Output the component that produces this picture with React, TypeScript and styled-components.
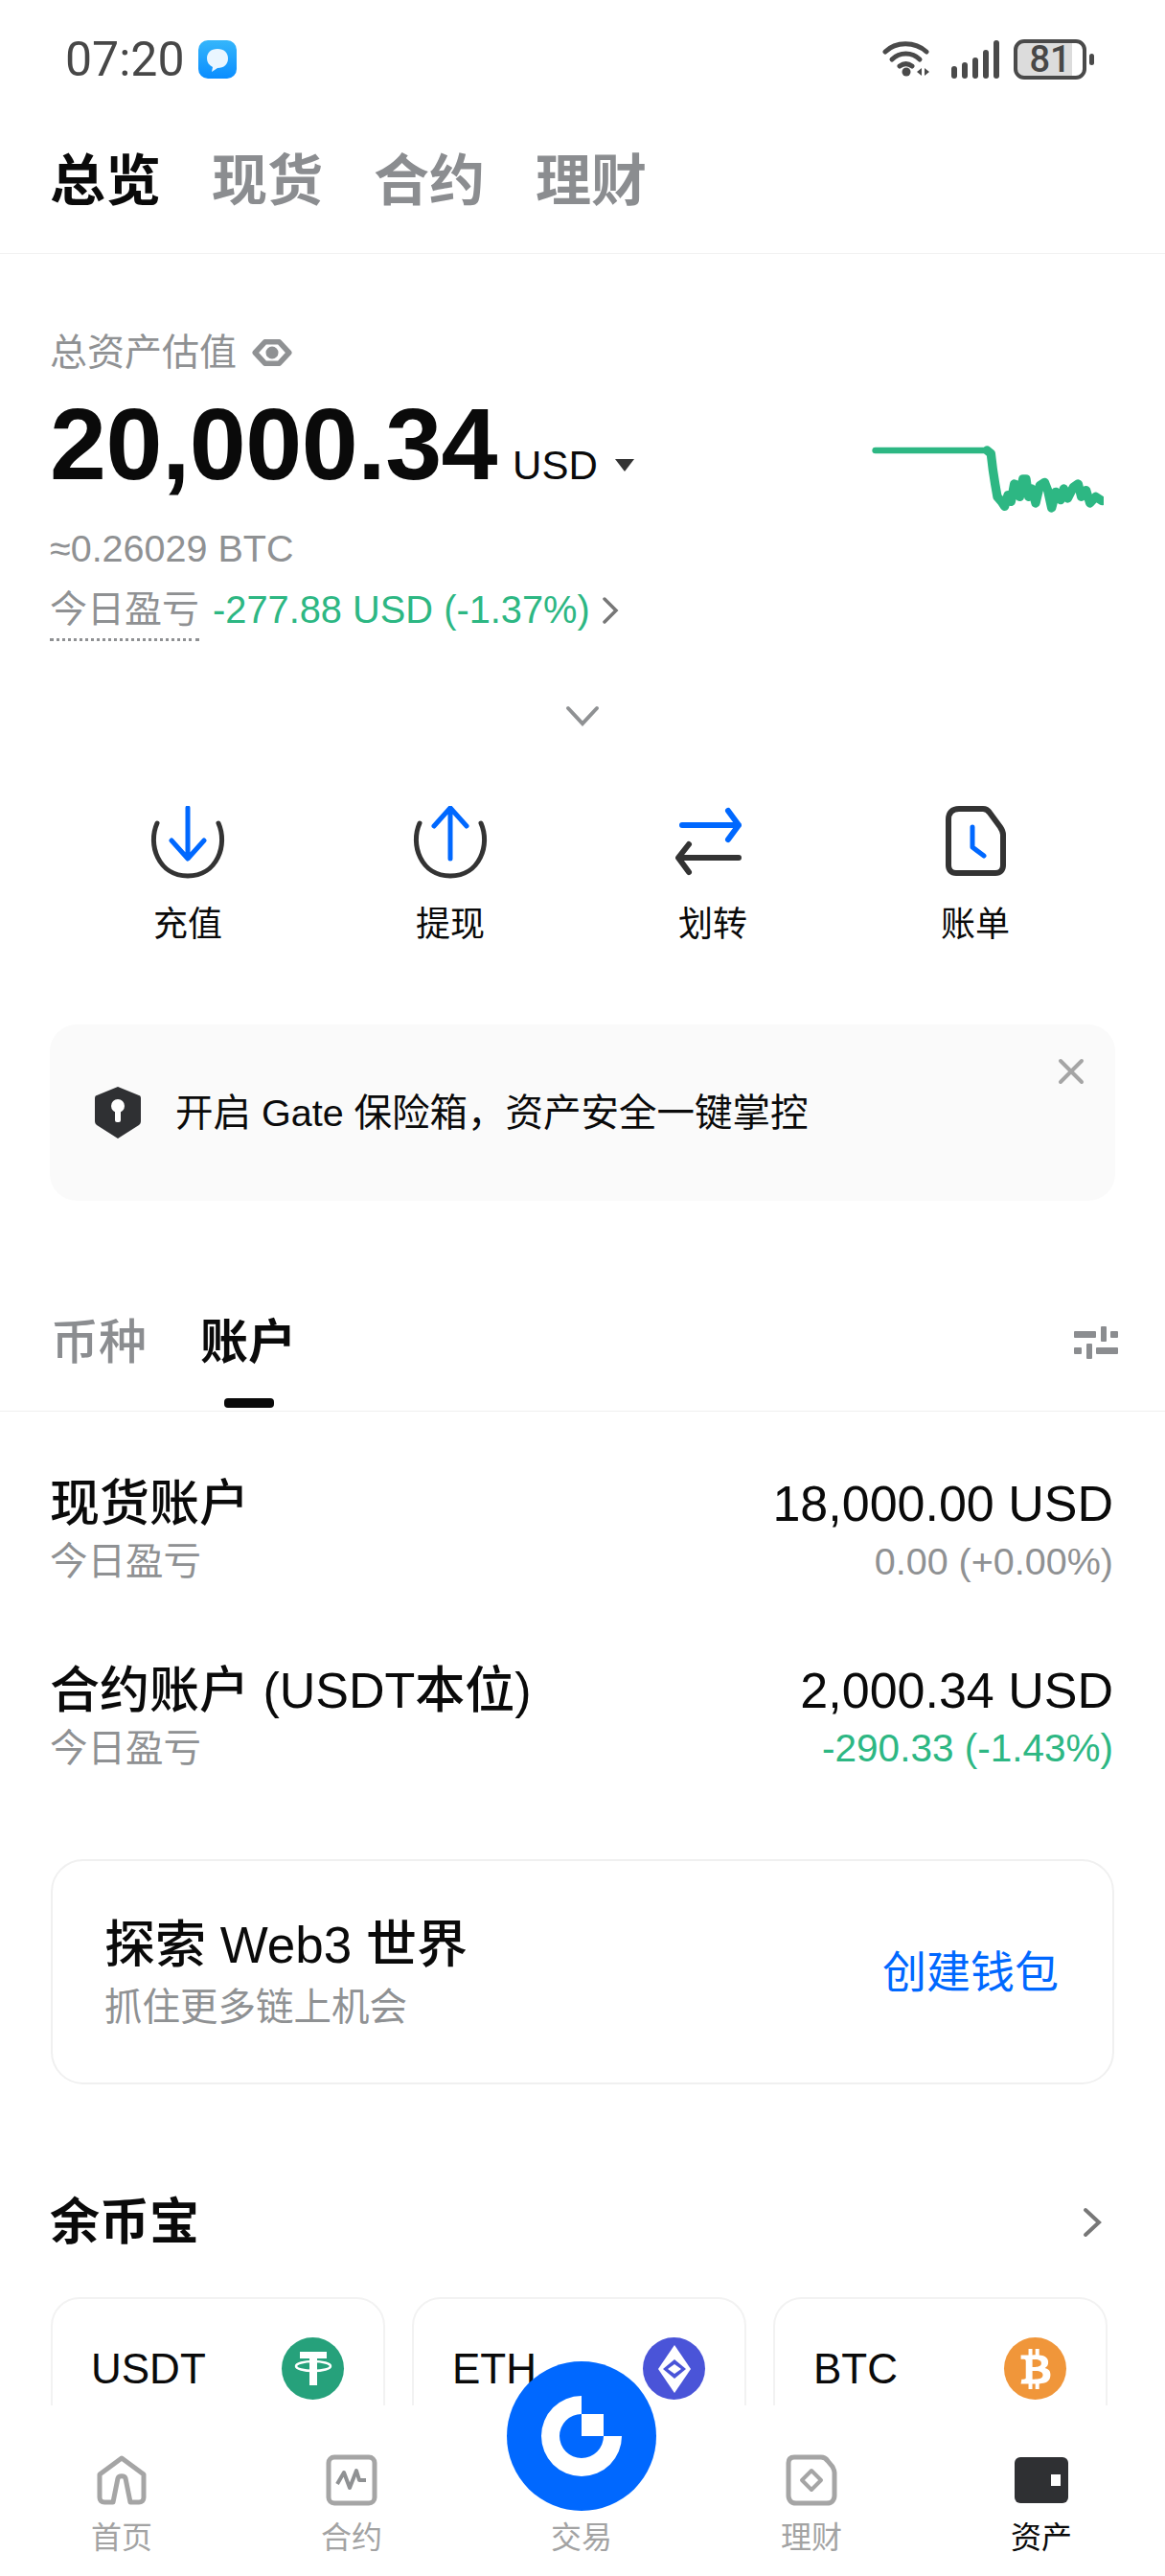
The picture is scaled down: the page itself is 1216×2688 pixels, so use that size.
import styled, { createGlobalStyle } from 'styled-components';
import { FaBtc } from 'react-icons/fa';

const GlobalStyle = createGlobalStyle`
  html, body {
    margin: 0;
    padding: 0;
    background: #fff;
  }
  * {
    box-sizing: border-box;
  }
`;

const Page = styled.div`
  position: relative;
  width: 1216px;
  height: 2688px;
  display: flex;
  flex-direction: column;
  overflow: hidden;
  background: #fff;
  color: #0a0a0a;
  font-family: 'Liberation Sans', 'Noto Sans CJK SC', sans-serif;
`;

const Content = styled.div`
  flex: 1;
  min-height: 0;
  overflow: hidden;
`;

const StatusBar = styled.div`
  height: 124px;
  display: flex;
  align-items: center;
  padding: 0 82px 0 68px;
`;

const Time = styled.span`
  font-family: Roboto, sans-serif;
  font-size: 50px;
  line-height: 60px;
  color: #474747;
`;

const ChatBadge = styled.svg`
  margin-left: 14px;
`;

const StatusIcons = styled.div`
  margin-left: auto;
  display: flex;
  align-items: center;
`;

const SignalBars = styled.svg`
  margin-left: 22px;
`;

const Battery = styled.div`
  position: relative;
  width: 76px;
  height: 42px;
  margin-left: 15px;
  border: 4px solid #4a4a4a;
  border-radius: 11px;
  background: linear-gradient(90deg, #dcdcdc 84%, #fff 84%);
  font-family: Roboto, sans-serif;
  font-size: 38px;
  font-weight: 500;
  line-height: 34px;
  text-align: center;
  color: #474747;
  &::after {
    content: '';
    position: absolute;
    right: -12px;
    top: 11px;
    width: 5px;
    height: 12px;
    border-radius: 3px;
    background: #4a4a4a;
  }
`;

const TopTabs = styled.div`
  height: 141px;
  padding: 33px 52px 0;
  display: flex;
  gap: 53px;
  border-bottom: 1px solid #f2f2f2;
`;

const TopTab = styled.span<{ $active?: boolean }>`
  font-size: 58px;
  line-height: 64px;
  font-weight: 700;
  color: ${props => (props.$active ? '#0a0a0a' : '#8b8d90')};
`;

const Summary = styled.section`
  padding: 81px 53px 0 52px;
  display: flex;
  justify-content: space-between;
  align-items: flex-start;
`;

const SummaryText = styled.div`
  display: flex;
  flex-direction: column;
  align-items: flex-start;
`;

const LabelRow = styled.div`
  display: flex;
  align-items: center;
  gap: 16px;
  font-size: 39px;
  line-height: 44px;
  color: #8f9193;
`;

const AmountRow = styled.div`
  margin-top: 21px;
  display: flex;
  align-items: baseline;
`;

const Amount = styled.span`
  font-size: 106px;
  line-height: 104px;
  font-weight: 700;
  letter-spacing: -0.5px;
`;

const Currency = styled.span`
  margin-left: 16px;
  font-size: 42px;
  line-height: 48px;
`;

const Caret = styled.span`
  align-self: center;
  margin: 44px 0 0 18px;
  width: 0;
  height: 0;
  border-left: 10px solid transparent;
  border-right: 10px solid transparent;
  border-top: 13px solid #333;
`;

const BtcLine = styled.div`
  margin-top: 35px;
  font-size: 39.5px;
  line-height: 44px;
  color: #8f9193;
`;

const PnlRow = styled.div`
  margin-top: 20px;
  display: flex;
  align-items: flex-start;
`;

const PnlLabel = styled.span`
  padding-bottom: 8px;
  border-bottom: 3px dotted #8f9193;
  font-size: 39px;
  line-height: 44px;
  color: #8f9193;
`;

const PnlValue = styled.span`
  margin-left: 14px;
  font-size: 39.8px;
  line-height: 44px;
  color: #2db783;
`;

const PnlChevron = styled.svg`
  margin: 9px 0 0 12px;
`;

const Spark = styled.svg`
  margin: 114px 11px 0 0;
`;

const Expand = styled.div`
  margin-top: 66px;
  height: 24px;
  display: flex;
  justify-content: center;
`;

const Actions = styled.div`
  margin-top: 82px;
  padding-left: 59px;
  display: grid;
  grid-template-columns: repeat(4, 274px);
`;

const Action = styled.div`
  display: flex;
  flex-direction: column;
  align-items: center;
`;

const ActionLabel = styled.span`
  margin-top: 22px;
  font-size: 36px;
  line-height: 44px;
`;

const Banner = styled.div`
  position: relative;
  margin: 82px 52px 0;
  height: 184px;
  padding-left: 47px;
  display: flex;
  align-items: center;
  gap: 36px;
  border-radius: 28px;
  background: #fafafa;
  font-size: 39.5px;
  line-height: 44px;
`;

const BannerClose = styled.svg`
  position: absolute;
  top: 35px;
  right: 32px;
`;

const AccountTabs = styled.div`
  margin-top: 118px;
  height: 102px;
  padding: 0 49px 0 53px;
  display: flex;
  gap: 56px;
  border-bottom: 1px solid #efefef;
`;

const AccountTab = styled.span<{ $active?: boolean }>`
  position: relative;
  height: 101px;
  font-size: 50px;
  line-height: 60px;
  font-weight: ${props => (props.$active ? 700 : 500)};
  color: ${props => (props.$active ? '#0a0a0a' : '#8b8d90')};
  ${props =>
    props.$active &&
    `&::after {
      content: '';
      position: absolute;
      left: 25px;
      bottom: 3px;
      width: 52px;
      height: 10px;
      border-radius: 4px;
      background: #0a0a0a;
    }`}
`;

const FilterIcon = styled.svg`
  margin: 13px 0 0 auto;
`;

const Accounts = styled.div`
  padding: 66px 54px 0 52px;
  display: flex;
  flex-direction: column;
  gap: 83px;
`;

const AccountRow = styled.div`
  display: flex;
  justify-content: space-between;
`;

const AccountSide = styled.div<{ $right?: boolean }>`
  display: flex;
  flex-direction: column;
  gap: 8px;
  align-items: ${props => (props.$right ? 'flex-end' : 'flex-start')};
`;

const AccountName = styled.span`
  font-size: 52px;
  line-height: 60px;
  font-weight: 500;
`;

const AccountSub = styled.span<{ $tone?: 'green' }>`
  font-size: ${props => (props.$tone === 'green' ? '40.5px' : '39.5px')};
  line-height: 44px;
  color: ${props => (props.$tone === 'green' ? '#2db783' : '#8f9193')};
`;

const Web3Card = styled.div`
  margin: 94px 53px 0;
  height: 235px;
  padding: 0 56px 0 54px;
  display: flex;
  align-items: center;
  justify-content: space-between;
  border: 2px solid #f0f0f0;
  border-radius: 34px;
`;

const Web3Text = styled.div`
  display: flex;
  flex-direction: column;
  gap: 12px;
`;

const Web3Title = styled.span`
  font-size: 53px;
  line-height: 60px;
  font-weight: 500;
`;

const Web3Sub = styled.span`
  font-size: 39.5px;
  line-height: 44px;
  color: #8f9193;
`;

const Web3Link = styled.span`
  font-size: 46px;
  line-height: 56px;
  color: #0068ff;
`;

const EarnHeader = styled.div`
  margin-top: 112px;
  padding: 0 66px 0 52px;
  display: flex;
  align-items: center;
  justify-content: space-between;
`;

const EarnTitle = styled.span`
  font-size: 52px;
  line-height: 64px;
  font-weight: 700;
`;

const CoinRow = styled.div`
  margin-top: 46px;
  padding-left: 53px;
  display: grid;
  grid-template-columns: repeat(3, 349px);
  gap: 28px;
`;

const CoinCard = styled.div`
  height: 200px;
  padding: 40px 41px 0 40px;
  display: flex;
  align-items: flex-start;
  justify-content: space-between;
  border: 2px solid #f2f2f2;
  border-radius: 30px;
`;

const CoinName = styled.span`
  font-size: 44px;
  line-height: 65px;
`;

const CoinIcon = styled.div<{ $bg: string }>`
  width: 65px;
  height: 65px;
  display: flex;
  align-items: center;
  justify-content: center;
  border-radius: 50%;
  color: #fff;
  background: ${props => props.$bg};
`;

const BottomNav = styled.nav`
  height: 178px;
  padding: 50px 0 0 7px;
  display: grid;
  grid-template-columns: repeat(5, 240px);
  background: #fff;
`;

const NavItem = styled.div`
  display: flex;
  flex-direction: column;
  align-items: center;
`;

const NavIcon = styled.div`
  height: 56px;
  display: flex;
  align-items: center;
`;

const NavLabel = styled.span<{ $active?: boolean; $raised?: boolean }>`
  margin-top: ${props => (props.$raised ? '68px' : '12px')};
  font-size: 32px;
  line-height: 40px;
  color: ${props => (props.$active ? '#0a0a0a' : '#a3a3a3')};
`;

const TradeButton = styled.div`
  position: absolute;
  left: 529px;
  bottom: 68px;
  width: 156px;
  height: 156px;
  display: flex;
  align-items: center;
  justify-content: center;
  border-radius: 50%;
  background: #0068ff;
`;

const flatPoints = '110,90 460,90';
const noisePoints =
  '472,100 478,150 485,195 492,235 505,250 515,265 525,230 535,250 545,195 555,200 562,235 572,180 582,180 590,235 600,210 612,255 625,200 640,190 650,215 662,270 675,220 690,245 700,210 712,240 730,205 745,195 755,235 770,215 782,255 800,235 820,248';

const ActionIcon = ({ kind }: { kind: 'in' | 'out' | 'swap' | 'bill' }) => {
  const dark = '#333';
  const blue = '#0068ff';
  return (
    <svg width="90" height="80" viewBox="0 0 90 80" fill="none" strokeWidth="5" strokeLinecap="round" strokeLinejoin="round">
      {kind === 'in' && (
        <>
          <path d="M13 18C3 40 14 73 45 73S87 40 77 18" stroke={dark} />
          <path d="M45 2V54M28 36L45 55L62 36" stroke={blue} />
        </>
      )}
      {kind === 'out' && (
        <>
          <path d="M13 18C3 40 14 73 45 73S87 40 77 18" stroke={dark} />
          <path d="M45 2V55M28 21L45 2L62 21" stroke={blue} />
        </>
      )}
      {kind === 'swap' && (
        <>
          <path d="M13 20H72M61 5L72 20L61 35" stroke={blue} strokeWidth="6" />
          <path d="M72 54H10M20 40L9 54L20 69" stroke={dark} strokeWidth="6" />
        </>
      )}
      {kind === 'bill' && (
        <>
          <path d="M28 3H53C56 3 58 4 60 7L71 22C73 25 74 27 74 30V62C74 67 71 70 66 70H25C20 70 17 67 17 62V14C17 7 21 3 28 3Z" stroke={dark} strokeWidth="6" />
          <path d="M42 22V43L54 52" stroke={blue} />
        </>
      )}
    </svg>
  );
};

export default function App() {
  return (
    <Page>
      <GlobalStyle />
      <Content>
        <StatusBar>
          <Time>07:20</Time>
          <ChatBadge width="40" height="40" viewBox="0 0 40 40">
            <defs>
              <linearGradient id="chat" x1="0" y1="0" x2="0" y2="1">
                <stop offset="0" stopColor="#35b6fb" />
                <stop offset="1" stopColor="#0a8dff" />
              </linearGradient>
            </defs>
            <rect width="40" height="40" rx="10" fill="url(#chat)" />
            <path d="M20 9C27 9 31 13 31 19S27 29 20 29L14 33L15 28C11 26 9 23 9 19C9 13 13 9 20 9Z" fill="#eaf6ff" />
          </ChatBadge>
          <StatusIcons>
            <svg width="50" height="40" viewBox="0 0 50 40" fill="none" stroke="#4a4a4a" strokeWidth="5" strokeLinecap="round">
              <path d="M3 12C14 1 34 1 46 12" />
              <path d="M10 20C18 12 31 12 39 20" />
              <path d="M18 27C22 24 27 24 31 27" />
              <circle cx="25" cy="33" r="4.5" fill="#4a4a4a" stroke="none" />
              <path d="M36 33L41 29V37ZM44 29L49 33L44 37Z" fill="#4a4a4a" stroke="none" />
            </svg>
            <SignalBars width="50" height="40" viewBox="0 0 50 40" fill="#4a4a4a">
              <rect x="0" y="27" width="6" height="13" rx="3" />
              <rect x="11" y="23" width="6" height="17" rx="3" />
              <rect x="22" y="18" width="6" height="22" rx="3" />
              <rect x="33" y="10" width="6" height="30" rx="3" />
              <rect x="44" y="0" width="6" height="40" rx="3" />
            </SignalBars>
            <Battery>81</Battery>
          </StatusIcons>
        </StatusBar>

        <TopTabs>
          <TopTab $active>总览</TopTab>
          <TopTab>现货</TopTab>
          <TopTab>合约</TopTab>
          <TopTab>理财</TopTab>
        </TopTabs>

        <Summary>
          <SummaryText>
            <LabelRow>
              总资产估值
              <svg width="42" height="28" viewBox="0 0 44 30" fill="none" stroke="#8f9193" strokeWidth="6" strokeLinejoin="round">
                <path d="M3 15L14 3H30L41 15L30 27H14Z" />
                <circle cx="22" cy="15" r="4" fill="#8f9193" />
              </svg>
            </LabelRow>
            <AmountRow>
              <Amount>20,000.34</Amount>
              <Currency>USD</Currency>
              <Caret />
            </AmountRow>
            <BtcLine>≈0.26029 BTC</BtcLine>
            <PnlRow>
              <PnlLabel>今日盈亏</PnlLabel>
              <PnlValue>-277.88 USD (-1.37%)</PnlValue>
              <PnlChevron width="18" height="28" viewBox="0 0 18 28" fill="none" stroke="#777" strokeWidth="3.5" strokeLinecap="round">
                <path d="M3 2L15 14L3 26" />
              </PnlChevron>
            </PnlRow>
          </SummaryText>
          <Spark width="245" height="75" viewBox="90 60 735 225" fill="none" stroke="#2db783" strokeLinecap="round" strokeLinejoin="round">
            <polyline points={flatPoints} strokeWidth="20" />
            <polyline points={`460,90 ${noisePoints}`} strokeWidth="28" />
          </Spark>
        </Summary>

        <Expand>
          <svg width="36" height="24" viewBox="0 0 36 24" fill="none" stroke="#8f9193" strokeWidth="4" strokeLinecap="round">
            <path d="M3 4L18 20L33 4" />
          </svg>
        </Expand>

        <Actions>
          <Action>
            <ActionIcon kind="in" />
            <ActionLabel>充值</ActionLabel>
          </Action>
          <Action>
            <ActionIcon kind="out" />
            <ActionLabel>提现</ActionLabel>
          </Action>
          <Action>
            <ActionIcon kind="swap" />
            <ActionLabel>划转</ActionLabel>
          </Action>
          <Action>
            <ActionIcon kind="bill" />
            <ActionLabel>账单</ActionLabel>
          </Action>
        </Actions>

        <Banner>
          <svg width="48" height="54" viewBox="0 0 48 54">
            <path d="M24 0L46 9C47 9 48 10 48 12V36C48 38 47 39 46 40L24 54L2 40C1 39 0 38 0 36V12C0 10 1 9 2 9Z" fill="#2f3033" />
            <circle cx="24" cy="20" r="7" fill="#fff" />
            <rect x="21" y="22" width="6" height="15" rx="2" fill="#fff" />
          </svg>
          <span>开启 Gate 保险箱，资产安全一键掌控</span>
          <BannerClose width="28" height="28" viewBox="0 0 28 28" fill="none" stroke="#a5a5a5" strokeWidth="4" strokeLinecap="round">
            <path d="M3 3L25 25M25 3L3 25" />
          </BannerClose>
        </Banner>

        <AccountTabs>
          <AccountTab>币种</AccountTab>
          <AccountTab $active>账户</AccountTab>
          <FilterIcon width="46" height="34" viewBox="0 0 46 34" fill="#8b8d90">
            <rect x="0" y="5" width="23" height="7" rx="1" />
            <rect x="28" y="0" width="6" height="16" rx="1" />
            <rect x="38" y="5" width="8" height="7" rx="1" />
            <rect x="0" y="22" width="8" height="7" rx="1" />
            <rect x="13" y="18" width="6" height="16" rx="1" />
            <rect x="23" y="22" width="23" height="7" rx="1" />
          </FilterIcon>
        </AccountTabs>

        <Accounts>
          <AccountRow>
            <AccountSide>
              <AccountName>现货账户</AccountName>
              <AccountSub>今日盈亏</AccountSub>
            </AccountSide>
            <AccountSide $right>
              <AccountName>18,000.00 USD</AccountName>
              <AccountSub>0.00 (+0.00%)</AccountSub>
            </AccountSide>
          </AccountRow>
          <AccountRow>
            <AccountSide>
              <AccountName>合约账户 (USDT本位)</AccountName>
              <AccountSub>今日盈亏</AccountSub>
            </AccountSide>
            <AccountSide $right>
              <AccountName>2,000.34 USD</AccountName>
              <AccountSub $tone="green">-290.33 (-1.43%)</AccountSub>
            </AccountSide>
          </AccountRow>
        </Accounts>

        <Web3Card>
          <Web3Text>
            <Web3Title>探索 Web3 世界</Web3Title>
            <Web3Sub>抓住更多链上机会</Web3Sub>
          </Web3Text>
          <Web3Link>创建钱包</Web3Link>
        </Web3Card>

        <EarnHeader>
          <EarnTitle>余币宝</EarnTitle>
          <svg width="20" height="32" viewBox="0 0 20 32" fill="none" stroke="#777" strokeWidth="4" strokeLinecap="round">
            <path d="M3 3L17 16L3 29" />
          </svg>
        </EarnHeader>

        <CoinRow>
          <CoinCard>
            <CoinName>USDT</CoinName>
            <CoinIcon $bg="#26a17b">
              <svg width="46" height="46" viewBox="0 0 46 46" fill="none">
                <path d="M9 5H37V12H27V40H19V12H9Z" fill="#fff" />
                <ellipse cx="23" cy="20" rx="18" ry="5" stroke="#fff" strokeWidth="2.5" />
              </svg>
            </CoinIcon>
          </CoinCard>
          <CoinCard>
            <CoinName>ETH</CoinName>
            <CoinIcon $bg="#4a54d8">
              <svg width="40" height="52" viewBox="0 0 40 52" fill="none">
                <path d="M20 1L37 26L20 51L3 26Z" fill="#fff" />
                <path d="M20 16L32 26L20 36L8 26Z" fill="#4a54d8" />
                <path d="M20 21L27 26L20 31L13 26Z" fill="#fff" />
              </svg>
            </CoinIcon>
          </CoinCard>
          <CoinCard>
            <CoinName>BTC</CoinName>
            <CoinIcon $bg="#f0963a">
              <FaBtc size={42} />
            </CoinIcon>
          </CoinCard>
        </CoinRow>
      </Content>

      <BottomNav>
        <NavItem>
          <NavIcon>
            <svg width="54" height="52" viewBox="0 0 54 52" fill="none" stroke="#a5a5a5" strokeWidth="5" strokeLinejoin="round" strokeLinecap="round">
              <path d="M27 3L50 20V44C50 47 48 49 45 49H36L31 24C30 21 24 21 23 24L18 49H9C6 49 4 47 4 44V20Z" />
            </svg>
          </NavIcon>
          <NavLabel>首页</NavLabel>
        </NavItem>
        <NavItem>
          <NavIcon>
            <svg width="54" height="54" viewBox="0 0 54 54" fill="none" stroke="#a5a5a5" strokeWidth="5" strokeLinejoin="round">
              <rect x="3" y="3" width="48" height="48" rx="6" />
              <path d="M12 31L19 19L25 35L32 17L35 27H42" stroke="#8f9193" strokeWidth="4" />
            </svg>
          </NavIcon>
          <NavLabel>合约</NavLabel>
        </NavItem>
        <NavItem>
          <NavLabel $raised>交易</NavLabel>
        </NavItem>
        <NavItem>
          <NavIcon>
            <svg width="54" height="54" viewBox="0 0 54 54" fill="none" stroke="#a5a5a5" strokeWidth="5" strokeLinejoin="round">
              <path d="M9 3H37C40 3 42 4 44 7L49 13C50 15 51 17 51 19V43C51 48 48 51 43 51H11C6 51 3 48 3 43V9C3 5 5 3 9 3Z" />
              <path d="M27 17L37 27L27 37L17 27Z" strokeWidth="4" />
            </svg>
          </NavIcon>
          <NavLabel>理财</NavLabel>
        </NavItem>
        <NavItem>
          <NavIcon>
            <svg width="56" height="48" viewBox="0 0 56 48">
              <rect width="56" height="48" rx="6" fill="#2f3033" />
              <rect x="38" y="18" width="10" height="12" fill="#fff" />
            </svg>
          </NavIcon>
          <NavLabel $active>资产</NavLabel>
        </NavItem>
      </BottomNav>

      <TradeButton>
        <svg width="90" height="90" viewBox="-45 -45 90 90" fill="#fff">
          <path d="M0 -42A42 42 0 1 0 42 0H23A23 23 0 1 1 0 -23Z" />
          <path d="M0 -23H23V0H0Z" />
        </svg>
      </TradeButton>
    </Page>
  );
}
